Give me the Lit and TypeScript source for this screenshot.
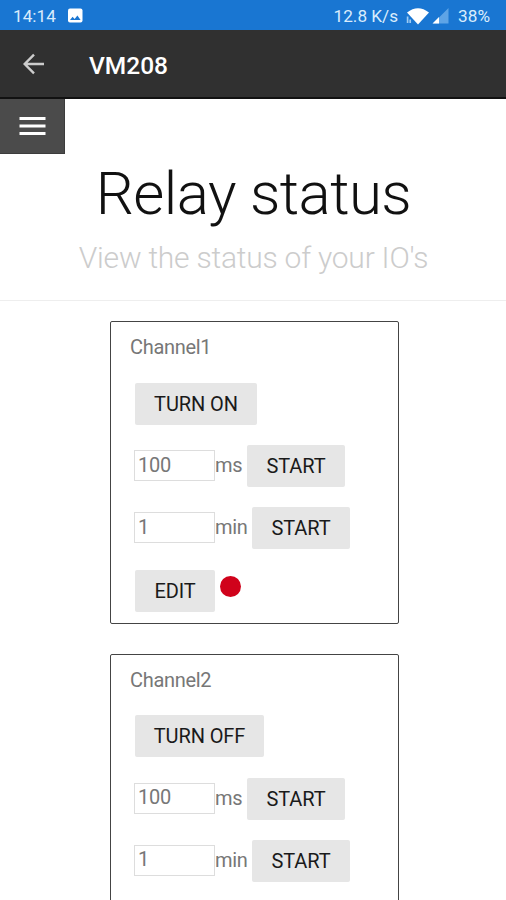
import { LitElement, html, css, nothing } from "lit";
import { customElement, property } from "lit/decorators.js";

@customElement("status-bar")
class StatusBar extends LitElement {
  static styles = css`
    :host { display: flex; align-items: center; height: 30px; box-sizing: border-box; padding: 2px 16px 0 13px; background: #1976d2; color: #d9ecfc; font-size: 17.2px; font-weight: 450; line-height: 28px; white-space: nowrap; }
    .picture { margin-left: 11px; width: 16px; height: 16px; }
    .rate { margin-left: auto; }
    .wifi { margin-left: 8px; width: 23px; height: 17px; }
    .signal { margin-left: 3px; margin-right: 9px; width: 17px; height: 16px; }
    svg { display: block; flex: none; }
  `;
  render() {
    return html`
      <span>14:14</span>
      <svg class="picture" viewBox="0 0 16 16"><rect x="1" y="0.5" width="14.5" height="14" rx="2" fill="#fff"/><path d="M3 12 5.6 8.8 7.6 11 10.4 7.6 13.6 12Z" fill="#1976d2"/></svg>
      <span class="rate">12.8 K/s</span>
      <svg class="wifi" viewBox="0 0 23 17"><path d="M1 4.5Q12 -4 23 4.5L12 16.5Z" fill="#fff"/><path d="M1.6 8.5V15M4.2 11.5V15" stroke="#9fccf3" stroke-width="1.7"/></svg>
      <svg class="signal" viewBox="0 0 17 16"><path d="M1 15.5 16.5 0V15.5Z" fill="#5ea4e6"/><path d="M0.5 15.5 7 9V15.5Z" fill="#fff"/></svg>
      <span>38%</span>
    `;
  }
}

@customElement("relay-card")
class RelayCard extends LitElement {
  @property() name = "";
  @property() action = "";
  @property({ type: Boolean }) editable = false;
  static styles = css`
    :host { display: block; box-sizing: border-box; width: 289px; height: 303px; border: 1.4px solid #444; border-radius: 2px; padding: 13px 20px 0 19px; color: #777; font-size: 20px; letter-spacing: -0.3px; }
    .name { height: 25px; line-height: 25px; margin-bottom: 22.8px; }
    .row { display: flex; height: 42px; margin: 0 0 20.35px 4px; align-items: flex-start; }
    button { font: inherit; letter-spacing: -0.1px; color: #1a1a1a; background: #e6e6e6; border: 0; border-radius: 2px; height: 42px; padding: 0; width: 98px; margin-left: 5px; line-height: 42px; }
    .toggle { width: 122px; margin-left: 1px; }
    .toggle.off { width: 129px; }
    .edit { width: 80px; margin-left: 1px; }
    input { font: inherit; letter-spacing: -0.2px; color: #777; box-sizing: border-box; width: 81px; height: 31px; margin: 5px 0 0; border: 1.4px solid #ddd; padding: 0 0 2px 3px; background: #fff; border-radius: 0; }
    .unit { line-height: 40px; }
    .ms { width: 27px; }
    .min { width: 32px; }
    .dot { width: 21px; height: 21px; border-radius: 50%; background: #d0021b; margin: 6px 0 0 5px; }
  `;
  render() {
    return html`
      <div class="name">${this.name}</div>
      <div class="row"><button class="toggle ${this.action === "TURN OFF" ? "off" : ""}">${this.action}</button></div>
      <div class="row"><input .value=${"100"}><span class="unit ms">ms</span><button>START</button></div>
      <div class="row"><input .value=${"1"}><span class="unit min">min</span><button>START</button></div>
      ${this.editable ? html`<div class="row"><button class="edit">EDIT</button><span class="dot"></span></div>` : nothing}
    `;
  }
}

@customElement("app-root")
class AppRoot extends LitElement {
  static styles = css`
    :host { display: block; width: 506px; height: 900px; overflow: hidden; background: #fff; font-family: Roboto, "Liberation Sans", sans-serif; }
    .appbar { display: flex; align-items: center; height: 69px; box-sizing: border-box; border-bottom: 2px solid #111; background: #303030; color: #fff; padding: 2px 0 0 22px; }
    .back { width: 24px; height: 24px; margin: -2px 43px 0 0; }
    .appname { font-size: 24.5px; font-weight: 500; line-height: 30px; padding-top: 2px; }
    .menu { display: flex; align-items: center; justify-content: center; width: 65px; height: 55px; box-sizing: border-box; background: #4b4b4b; border: solid #3c3c3c; border-width: 0 1px 1px 0; padding: 0; }
    .hamburger { width: 27px; height: 22px; }
    header { height: 147px; box-sizing: border-box; border-bottom: 1.5px solid #eee; text-align: center; white-space: nowrap; }
    h1 { margin: 0; font-size: 60px; font-weight: 300; line-height: 80px; letter-spacing: -0.55px; color: #111; padding-left: 1px; }
    h2 { margin: 0; font-size: 30px; font-weight: 300; line-height: 48px; letter-spacing: -0.22px; color: #ccc; padding-left: 1px; }
    .cards { display: flex; flex-direction: column; gap: 29.5px; padding: 20px 0 0 110px; }
  `;
  render() {
    return html`
      <status-bar></status-bar>
      <div class="appbar">
        <svg class="back" viewBox="0 0 24 24" fill="none" stroke="#ccc" stroke-width="2.4"><path d="M22 12H3M12 2.7 2.7 12 12 21.3"/></svg>
        <span class="appname">VM208</span>
      </div>
      <button class="menu"><svg class="hamburger" viewBox="0 0 27 22"><path d="M.5 3.5H26.5M.5 11H26.5M.5 18.5H26.5" stroke="#fff" stroke-width="2.8"/></svg></button>
      <header><h1>Relay status</h1><h2>View the status of your IO's</h2></header>
      <div class="cards">
        <relay-card name="Channel1" action="TURN ON" editable></relay-card>
        <relay-card name="Channel2" action="TURN OFF"></relay-card>
      </div>
    `;
  }
}
